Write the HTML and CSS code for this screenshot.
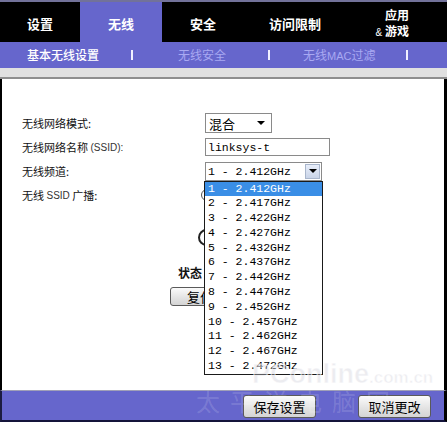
FILE: index.html
```html
<!DOCTYPE html>
<html lang="zh-CN">
<head>
<meta charset="utf-8">
<title>无线 - 基本无线设置</title>
<link rel="stylesheet" href="styles.css">
</head>
<body>
<div class="page">
  <div class="tabs">
    <div class="tab t1">设置</div>
    <div class="tab t2 active">无线</div>
    <div class="tab t3">安全</div>
    <div class="tab t4">访问限制</div>
    <div class="tab t5 two"><span>应用</span><span><small>&amp;</small> 游戏</span></div>
  </div>
  <div class="subnav">
    <span class="sub current">基本无线设置</span>
    <span class="sep s1"></span>
    <span class="sub dim i2">无线安全</span>
    <span class="sep s2"></span>
    <span class="sub dim i3">无线<span class="lat">MAC</span>过滤</span>
    <span class="sep s3"></span>
  </div>
  <div class="band"></div>
  <div class="content">
    <div class="form">
      <div class="label">无线网络模式:</div>
      <div class="ctl"><div class="sel mode"><span>混合</span><span class="tri"></span></div></div>
      <div class="label">无线网络名称 <span class="lat">(SSID):</span></div>
      <div class="ctl"><div class="inp">linksys-t</div></div>
      <div class="label">无线频道:</div>
      <div class="ctl">
        <div class="sel chan"><span class="val">1 - 2.412GHz</span><span class="btn"><span class="tri"></span></span>
          <ul class="list">
            <li class="hi">1 - 2.412GHz</li>
            <li>2 - 2.417GHz</li>
            <li>3 - 2.422GHz</li>
            <li>4 - 2.427GHz</li>
            <li>5 - 2.432GHz</li>
            <li>6 - 2.437GHz</li>
            <li>7 - 2.442GHz</li>
            <li>8 - 2.447GHz</li>
            <li>9 - 2.452GHz</li>
            <li>10 - 2.457GHz</li>
            <li>11 - 2.462GHz</li>
            <li>12 - 2.467GHz</li>
            <li>13 - 2.472GHz</li>
          </ul>
        </div>
      </div>
      <div class="label">无线 <span class="lat">SSID</span> 广播:</div>
      <div class="ctl"><span class="radio"></span></div>
    </div>
    <div class="extra"><span class="radio big"></span></div>
    <div class="status">状态</div>
    <div class="reset"><span class="b reset-btn">复位</span></div>
  </div>
  <div class="footer">
    <span class="b fbtn">保存设置</span>
    <span class="b fbtn">取消更改</span>
  </div>
  <div class="wm wm1">PConline<span class="small">.com.cn</span></div>
  <div class="wm wm2">太平洋电脑网</div>
</div>
</body>
</html>
```
FILE: styles.css
```css
html, body {
  margin: 0;
  padding: 0;
}
body {
  width: 447px;
  height: 422px;
  overflow: hidden;
  background: #fff;
  font-family: "Noto Sans CJK SC", "Liberation Sans", sans-serif;
}
.page {
  position: relative;
  width: 447px;
  height: 422px;
  display: flex;
  flex-direction: column;
  background: #000;
}

/* top tabs */
.tabs {
  height: 42px;
  box-sizing: border-box;
  display: flex;
  background: #000;
  border-top: 2px solid #72729a;
  padding-right: 3px;
}
.tab {
  height: 40px;
  box-sizing: border-box;
  padding-top: 3px;
  display: flex;
  align-items: center;
  justify-content: center;
  color: #fff;
  font-weight: bold;
  font-size: 13px;
}
.t1 { width: 80px; }
.t2 { width: 82px; }
.t3 { width: 82px; }
.t4 { width: 102px; }
.t5 { width: 98px; }
.tab.active { background: #6666cc; }
.tab.two {
  flex-direction: column;
  align-items: flex-end;
  padding: 3px 35px 0 0;
  font-size: 12px;
  line-height: 16px;
}
.tab.two small {
  font-family: "Liberation Sans", sans-serif;
  font-size: 10px;
  font-weight: normal;
}

/* sub navigation */
.subnav {
  height: 26px;
  background: #6666cc;
  display: flex;
  align-items: center;
  padding-left: 27px;
  font-size: 12px;
  line-height: 14px;
}
.sub { color: #fff; white-space: nowrap; }
.sub.current { font-weight: 500; }
.sub.dim { color: #a9a9f2; }
.sub .lat { font-family: "Liberation Sans", sans-serif; font-size: 11px; }
.sep {
  width: 2px;
  height: 10px;
  background: #f0f0ff;
}
.s1 { margin-left: 32px; }
.i2 { margin-left: 45px; }
.s2 { margin-left: 42px; }
.i3 { margin-left: 33px; }
.s3 { margin-left: 30px; }

.band {
  height: 9px;
  background: #e0e0e0;
  border-bottom: 2px solid #8e8e8e;
}

/* content */
.content {
  flex: 1;
  background: #fff;
  border-left: 2px solid #000;
  border-right: 3px solid #000;
  padding-top: 34px;
  font-size: 11px;
  color: #111;
}
.form {
  display: grid;
  grid-template-columns: 183px 150px;
  grid-auto-rows: 20px;
  row-gap: 4px;
  padding-left: 20px;
}
.label {
  display: flex;
  align-items: center;
  white-space: pre;
}
.label .lat {
  font-family: "Liberation Sans", sans-serif;
  font-size: 10px;
  color: #333;
}
.ctl {
  display: flex;
  align-items: center;
}
.sel, .inp {
  box-sizing: border-box;
  border: 1px solid #8a8a8a;
  background: #fff;
  display: flex;
  align-items: center;
}
.mode {
  width: 67px;
  height: 20px;
  padding: 0 6px 0 3px;
  justify-content: space-between;
  font-size: 13px;
  color: #000;
}
.tri {
  width: 0;
  height: 0;
  border-left: 4px solid transparent;
  border-right: 4px solid transparent;
  border-top: 4px solid #000;
}
.inp {
  width: 125px;
  height: 18px;
  padding-left: 2px;
  font-family: "Liberation Mono", monospace;
  font-size: 11.5px;
  color: #000;
}
.chan {
  position: relative;
  width: 117px;
  height: 19px;
  padding-left: 2px;
  font-family: "Liberation Mono", monospace;
  font-size: 11.5px;
  color: #000;
}
.chan .val { flex: 1; }
.chan .btn {
  width: 15px;
  height: 15px;
  margin-right: 1px;
  box-sizing: border-box;
  border: 1px solid #a9b6cc;
  background: linear-gradient(#e8eefa, #c9d4e8);
  display: flex;
  align-items: center;
  justify-content: center;
}
.list {
  position: absolute;
  z-index: 5;
  top: 18px;
  left: -2px;
  width: 119px;
  box-sizing: border-box;
  margin: 0;
  padding: 0;
  list-style: none;
  background: #fff;
  border: 1px solid #1a1a1a;
}
.list li {
  height: 14.8px;
  line-height: 14.8px;
  padding-left: 3px;
  white-space: pre;
}
.list li.hi {
  background: #3a8ee6;
  color: #fff;
}
.radio {
  display: inline-block;
  width: 12px;
  height: 12px;
  box-sizing: border-box;
  border: 1px solid #555;
  border-radius: 50%;
  margin-left: -4px;
}
.extra {
  margin-top: 24px;
  padding-left: 196px;
  height: 18px;
}
.radio.big {
  width: 17px;
  height: 17px;
  border: 2px solid #222;
  margin-left: 0;
}
.status {
  margin-top: 18px;
  padding-left: 176px;
  font-weight: bold;
  font-size: 12px;
  line-height: 16px;
}
.reset {
  margin-top: 6px;
  padding-left: 168px;
}
.b {
  display: inline-flex;
  align-items: center;
  justify-content: center;
  box-sizing: border-box;
  border: 1px solid #5a5a5a;
  border-radius: 3px;
  background: linear-gradient(#fbfbfb, #e2e2e2 60%, #d4d4d4);
  color: #000;
  font-size: 13px;
}
.reset-btn {
  width: 60px;
  height: 19px;
}

/* footer */
.footer {
  position: relative;
  z-index: 3;
  height: 32px;
  box-sizing: border-box;
  background: #6666cc;
  border-top: 1px solid #a0a0b8;
  border-left: 2px solid #1c1c40;
  border-right: 3px solid #000;
  border-bottom: 2px solid #14143a;
  display: flex;
  justify-content: flex-end;
  gap: 42px;
  padding: 4px 13px 0 0;
}
.fbtn {
  width: 73px;
  height: 23px;
  position: relative;
  z-index: 4;
}

/* watermark overlay */
.wm {
  position: absolute;
  white-space: nowrap;
  pointer-events: none;
}
.wm1 {
  z-index: 6;
  left: 252px;
  top: 359px;
  font-family: "Liberation Sans", sans-serif;
  font-weight: bold;
  font-size: 27px;
  color: rgba(205, 205, 215, 0.4);
  -webkit-text-stroke: 1px rgba(255, 255, 255, 0.7);
}
.wm1 .small { font-size: 17px; }
.wm2 {
  z-index: 3;
  left: 196px;
  top: 383px;
  font-size: 24px;
  letter-spacing: 10px;
  color: rgba(255, 255, 255, 0.15);
}
```
